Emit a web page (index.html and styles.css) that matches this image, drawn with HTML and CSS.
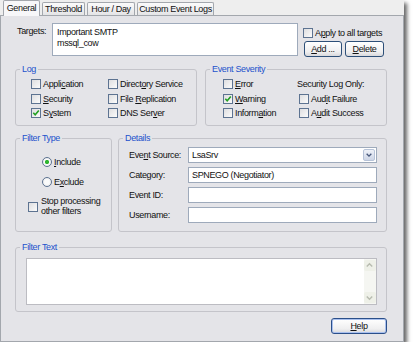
FILE: index.html
```html
<!DOCTYPE html>
<html lang="en">
<head>
    <meta charset="UTF-8">
    <title>Event Log Filter</title>
    <link rel="stylesheet" href="styles.css">
</head>
<body>
    <div class="dialog">
        <!-- Tabs -->
        <div class="tabs">
            <div class="tab tab-general active">General</div>
            <div class="tab tab-threshold">Threshold</div>
            <div class="tab tab-hours">Hour / Day</div>
            <div class="tab tab-custom">Custom Event Logs</div>
        </div>

        <div class="panel">
            <!-- Targets -->
            <div class="targets-row">
                <div class="targets-label">Targets:</div>
                <div class="targets-box">Important SMTP<br>mssql_cow</div>
                <div class="targets-side">
                    <div class="check apply"><span class="box"></span><span>A<u>p</u>ply to all targets</span></div>
                    <div class="btn-row">
                        <button class="btn btn-add"><u>A</u>dd ...</button>
                        <button class="btn btn-delete"><u>D</u>elete</button>
                    </div>
                </div>
            </div>

            <!-- Log / Event Severity -->
            <div class="group-row first-row">
                <fieldset class="group log">
                    <legend>Log</legend>
                    <div class="check-grid log-grid">
                        <div class="check"><span class="box"></span><span>Appli<u>c</u>ation</span></div>
                        <div class="check"><span class="box"></span><span>Direct<u>o</u>ry Service</span></div>
                        <div class="check"><span class="box"></span><span><u>S</u>ecurity</span></div>
                        <div class="check"><span class="box"></span><span>File <u>R</u>eplication</span></div>
                        <div class="check"><span class="box checked"><svg viewBox="0 0 8 8"><path d="M1.3 3.8 L3.2 5.8 L6.8 1.6"/></svg></span><span>S<u>y</u>stem</span></div>
                        <div class="check"><span class="box"></span><span>DNS Ser<u>v</u>er</span></div>
                    </div>
                </fieldset>
                <fieldset class="group severity">
                    <legend>Event Severity</legend>
                    <div class="check-grid severity-grid">
                        <div class="check"><span class="box"></span><span><u>E</u>rror</span></div>
                        <div class="plain">Security Log Only:</div>
                        <div class="check"><span class="box checked"><svg viewBox="0 0 8 8"><path d="M1.3 3.8 L3.2 5.8 L6.8 1.6"/></svg></span><span><u>W</u>arning</span></div>
                        <div class="check indent"><span class="box"></span><span>Aud<u>i</u>t Failure</span></div>
                        <div class="check"><span class="box"></span><span>Inform<u>a</u>tion</span></div>
                        <div class="check indent"><span class="box"></span><span>A<u>u</u>dit Success</span></div>
                    </div>
                </fieldset>
            </div>

            <!-- Filter Type / Details -->
            <div class="group-row second-row">
                <fieldset class="group filter-type">
                    <legend>Filter Type</legend>
                    <div class="filter-type-body">
                        <div class="radio-row"><span class="radio on"></span><span><u>I</u>nclude</span></div>
                        <div class="radio-row"><span class="radio"></span><span>E<u>x</u>clude</span></div>
                        <div class="check stop"><span class="box"></span><span>Stop processing<br>other filters</span></div>
                    </div>
                </fieldset>
                <fieldset class="group details">
                    <legend>Details</legend>
                    <div class="details-body">
                        <div class="field">
                            <span class="field-label">Eve<u>n</u>t Source:</span>
                            <div class="select">
                                <span>LsaSrv</span>
                                <span class="select-btn"><svg viewBox="0 0 12 12"><path d="M3.2 4.6 L6 7.4 L8.8 4.6"/></svg></span>
                            </div>
                        </div>
                        <div class="field">
                            <span class="field-label">Category:</span>
                            <div class="input">SPNEGO (Negotiator)</div>
                        </div>
                        <div class="field">
                            <span class="field-label">Event ID:</span>
                            <div class="input"></div>
                        </div>
                        <div class="field">
                            <span class="field-label">Username:</span>
                            <div class="input"></div>
                        </div>
                    </div>
                </fieldset>
            </div>

            <!-- Filter Text -->
            <fieldset class="group filter-text">
                <legend>Filter Text</legend>
                <div class="filter-text-body">
                    <div class="text-area">
                        <div class="scrollbar">
                            <span class="scroll-btn"><svg viewBox="0 0 10 10"><path d="M2.5 6 L5 3.5 L7.5 6"/></svg></span>
                            <span class="scroll-btn"><svg viewBox="0 0 10 10"><path d="M2.5 4 L5 6.5 L7.5 4"/></svg></span>
                        </div>
                    </div>
                </div>
            </fieldset>

            <div class="footer">
                <button class="btn btn-help"><u>H</u>elp</button>
            </div>
        </div>
    </div>
</body>
</html>
```

FILE: styles.css
```css
* {
    box-sizing: border-box;
}
body {
    margin: 0;
    background: #fff;
    font-family: "Liberation Sans", Arial, sans-serif;
    font-size: 9px;
    letter-spacing: -0.35px;
    color: #111;
}
u {
    text-decoration-thickness: 1px;
    text-underline-offset: 1px;
}
.dialog {
    width: 404px;
    height: 342px;
    background: #eeeeee;
    box-shadow: 3px 3px 4px rgba(0, 0, 0, 0.6);
}

/* tabs */
.tabs {
    display: flex;
    align-items: flex-end;
    height: 15px;
    padding-left: 3px;
}
.tab {
    height: 13px;
    margin-right: 2px;
    border: 1px solid #a3a7ad;
    border-bottom: none;
    border-radius: 2px 2px 0 0;
    background: linear-gradient(#fbfbfb, #e4e4e6);
    line-height: 12px;
    text-align: center;
    white-space: nowrap;
}
.tab.active {
    position: relative;
    z-index: 1;
    height: 16px;
    margin-bottom: -1px;
    background: #f7f7f9;
    line-height: 14px;
}
.tab-general { width: 37px; }
.tab-threshold { width: 43px; }
.tab-hours { width: 48px; }
.tab-custom { width: 77px; }

.panel {
    height: 327px;
    border: 1px solid #a3a7ad;
    background: #e4e4e8;
    padding: 7px 16px 0 14px;
}

/* targets */
.targets-row {
    display: flex;
    height: 33px;
}
.targets-label {
    width: 37px;
    padding: 3px 0 0 2px;
    line-height: 10px;
}
.targets-box {
    width: 246px;
    border: 1px solid #9eaabb;
    background: #fff;
    padding: 3px 4px;
    line-height: 10.5px;
}
.targets-side {
    margin-left: 5px;
    padding-top: 5px;
}
.btn-row {
    display: flex;
    gap: 3px;
    margin-top: 3px;
    padding-left: 1px;
}
.btn {
    height: 16px;
    padding: 0;
    border: 1px solid #2d4f78;
    border-radius: 3px;
    background: linear-gradient(#ffffff, #efeff0 70%, #d9d9dc);
    font: inherit;
    letter-spacing: inherit;
    color: #111;
    line-height: 13px;
}
.btn-add { width: 38px; }
.btn-delete { width: 39px; }

/* checkboxes */
.check {
    display: flex;
    align-items: center;
    gap: 2px;
    white-space: nowrap;
    line-height: 10px;
}
.box {
    flex: none;
    display: flex;
    align-items: center;
    justify-content: center;
    width: 10px;
    height: 10px;
    border: 1px solid #5d7391;
    background: linear-gradient(135deg, #dedee0, #fbfbfb);
}
.box svg {
    width: 8px;
    height: 8px;
}
.box path {
    fill: none;
    stroke: #22a022;
    stroke-width: 1.6;
}

/* group boxes */
.group-row {
    display: flex;
}
.group {
    margin: 0;
    padding: 0;
    min-width: 0;
    border: 1px solid #c4c4ca;
    border-radius: 3px;
}
.group legend {
    margin-left: 4px;
    padding: 0 2px;
    color: #2352cc;
    line-height: 10px;
}
.first-row {
    margin-top: 8px;
    gap: 8px;
}
.log,
.severity {
    width: 182px;
    height: 62px;
}
.check-grid {
    display: grid;
    grid-auto-rows: 14.5px;
    align-items: center;
    padding-top: 3px;
}
.log-grid {
    grid-template-columns: 77px auto;
    padding-left: 15px;
}
.severity-grid {
    grid-template-columns: 74px auto;
    padding-left: 17px;
}
.indent {
    margin-left: 2px;
}

.second-row {
    margin-top: 7px;
    gap: 6px;
}
.filter-type {
    width: 97px;
    height: 99px;
}
.filter-type-body {
    padding: 12px 0 0 26px;
}
.radio-row {
    display: flex;
    align-items: center;
    gap: 2px;
    height: 14px;
    margin-bottom: 6px;
}
.radio {
    flex: none;
    width: 10px;
    height: 10px;
    border: 1px solid #5d7391;
    border-radius: 50%;
    background: radial-gradient(circle, #fbfbfb 40%, #dedee0);
}
.radio.on {
    background: radial-gradient(circle, #2fb52f 0 1.8px, #fbfbfb 2.4px, #fbfbfb 40%, #dedee0);
}
.stop {
    margin: 8px 0 0 -14px;
    gap: 3px;
    line-height: 9.5px;
}

.details {
    width: 269px;
    height: 99px;
}
.details-body {
    padding: 4px 9px 0 10px;
}
.field {
    display: flex;
    align-items: center;
    height: 16px;
    margin-bottom: 4px;
}
.field-label {
    width: 59px;
    flex: none;
    white-space: nowrap;
}
.input,
.select {
    flex: 1;
    height: 16px;
    border: 1px solid #9eaabb;
    background: #fff;
    padding: 0 3px;
    line-height: 14px;
}
.select {
    display: flex;
    justify-content: space-between;
    padding-right: 1px;
}
.select-btn {
    width: 12px;
    height: 12px;
    margin-top: 1px;
    border: 1px solid #b7c3d8;
    border-radius: 2px;
    background: linear-gradient(#eef1f8, #cdd5e6);
}
.select-btn svg {
    display: block;
    width: 10px;
    height: 10px;
}
.select-btn path {
    fill: none;
    stroke: #45567a;
    stroke-width: 1.6;
}

/* filter text */
.filter-text {
    height: 70px;
    margin-top: 10px;
}
.filter-text-body {
    padding: 6px 9px 0 10px;
}
.text-area {
    display: flex;
    justify-content: flex-end;
    height: 47px;
    border: 1px solid #bcbcc2;
    background: #fff;
}
.scrollbar {
    display: flex;
    flex-direction: column;
    justify-content: space-between;
    width: 12px;
    padding: 1px 0;
    background: #f5f6f2;
}
.scroll-btn {
    height: 11px;
    border-radius: 2px;
    background: #eef0e8;
}
.scroll-btn svg {
    display: block;
    width: 11px;
    height: 11px;
}
.scroll-btn path {
    fill: none;
    stroke: #b8bcb0;
    stroke-width: 1.3;
}

.footer {
    display: flex;
    justify-content: flex-end;
    margin-top: 6px;
}
.btn-help {
    width: 56px;
    border-color: #2b4f8a;
    box-shadow: inset 0 0 0 1px #a9c0ee;
}
```
